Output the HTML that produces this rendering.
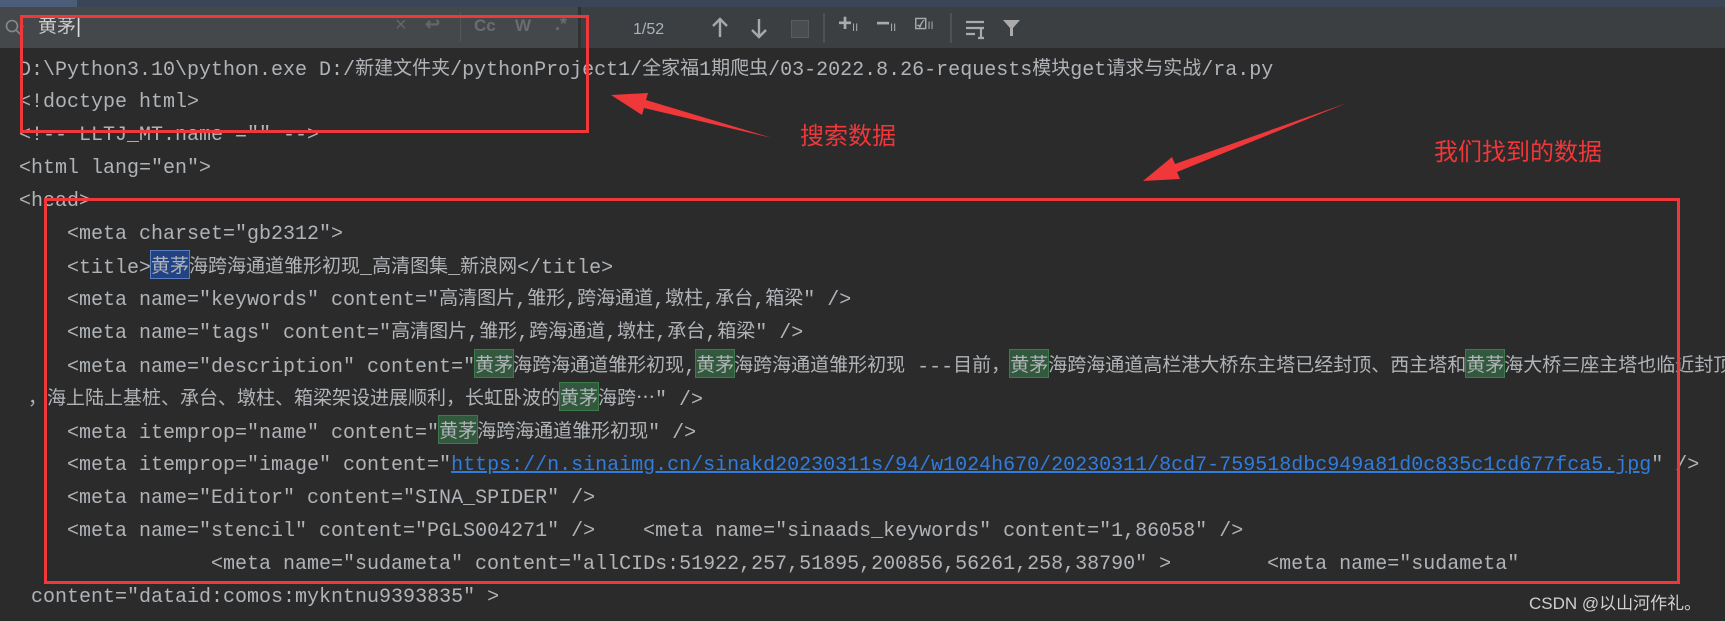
<!DOCTYPE html>
<html><head><meta charset="utf-8"><style>
body{margin:0;width:1725px;height:621px;overflow:hidden;background:#2b2b2b;position:relative;font-family:"Liberation Mono","Noto Sans CJK SC",monospace;font-size:20px;color:#b0b4b8}
.top{position:absolute;left:0;top:0;width:1725px;height:7px;background:#3a4556}
.top i{position:absolute;left:0;top:0;width:77px;height:7px;background:#4b5d78}
.bar{position:absolute;left:0;top:7px;width:1725px;height:41px;background:#3c3f41}
.fld{position:absolute;left:0;top:7px;width:578px;height:41px;background:#45484a;border-right:3px solid #323232}
.l{position:absolute;white-space:pre;height:33px;line-height:33px}
.c{font-family:"Noto Sans CJK SC",sans-serif;font-size:19px;line-height:1;display:inline-block;vertical-align:1px}
.g{background:#32593d;outline:1px solid #3f7a4c;padding:4px 0}
.b{background:#214283;outline:1px solid #5a7ec0;padding:4px 0}
.u{color:#2f7ddf;text-decoration:underline}
.box{position:absolute;border:3px solid #f0373a}
.red{position:absolute;color:#f0373a;font-family:"Noto Sans CJK SC",sans-serif;font-size:24px;white-space:nowrap}
.ic{position:absolute;color:#9a9da0;font-family:"Liberation Sans",sans-serif;font-weight:bold}
</style></head><body>
<div class="top"><i></i></div>
<div class="bar"></div>
<div class="fld"></div>
<svg style="position:absolute;left:4px;top:18px" width="22" height="20"><circle cx="8" cy="8" r="5.5" fill="none" stroke="#888" stroke-width="1.6"/><line x1="12" y1="12" x2="16" y2="16" stroke="#888" stroke-width="1.6"/><path d="M17 8l3 0-1.5 2z" fill="#888"/></svg>
<div class="l" style="left:38px;top:11px;color:#ccc"><span class="c">黄茅</span><span style="color:#ddd;font-family:'Liberation Sans'">|</span></div>
<div class="ic" style="left:395px;top:14px;font-weight:normal;font-size:20px;color:#666">×</div>
<div class="ic" style="left:425px;top:14px;font-size:18px;color:#666">↩</div>
<div style="position:absolute;left:460px;top:12px;width:1px;height:30px;background:#555"></div>
<div class="ic" style="left:474px;top:16px;font-size:17px;color:#6a6d70">Cc</div>
<div class="ic" style="left:515px;top:16px;font-size:17px;color:#6a6d70">W</div>
<div class="ic" style="left:555px;top:14px;font-size:18px;color:#6a6d70">.*</div>
<div class="l" style="left:633px;top:13px;font-family:'Liberation Sans';font-size:16px;color:#a9b2be">1/52</div>
<svg style="position:absolute;left:708px;top:16px" width="120" height="24" fill="none" stroke="#a8a8a8" stroke-width="2.4">
<path d="M12 21V3M5 10L12 3L19 10"/>
<path d="M51 3V21M44 14L51 21L58 14"/>
</svg>
<div style="position:absolute;left:791px;top:20px;width:16px;height:16px;border:1px solid #5a5d60;background:#4a4d50"></div>
<div style="position:absolute;left:823px;top:13px;width:2px;height:30px;background:#4e5254"></div>
<div class="ic" style="left:838px;top:10px;font-size:24px;color:#aaa">+<span style="font-size:11px;font-weight:normal">II</span></div>
<div class="ic" style="left:876px;top:10px;font-size:24px;color:#aaa">−<span style="font-size:11px;font-weight:normal">II</span></div>
<div class="ic" style="left:914px;top:15px;font-size:15px;color:#aaa">☑<span style="font-size:11px;font-weight:normal">II</span></div>
<div style="position:absolute;left:950px;top:13px;width:2px;height:30px;background:#4e5254"></div>
<svg style="position:absolute;left:965px;top:20px" width="22" height="20" stroke="#aaa" stroke-width="2.2"><path d="M1 2H19M1 8H13M1 14H10M16 8V18M13 8H19M13 18H19"/></svg>
<svg style="position:absolute;left:1002px;top:19px" width="20" height="20"><path d="M1 1H18L11 9V17H8V9Z" fill="#aaa"/></svg>

<div class="l" style="left:19px;top:54px">D:\Python3.10\python.exe D:/<span class="c">新建文件夹</span>/pythonProject1/<span class="c">全家福</span>1<span class="c">期爬虫</span>/03-2022.8.26-requests<span class="c">模块</span>get<span class="c">请求与实战</span>/ra.py</div>
<div class="l" style="left:19px;top:86px">&lt;!doctype html&gt;</div>
<div class="l" style="left:19px;top:119px">&lt;!-- LLTJ_MT.name ="" --&gt;</div>
<div class="l" style="left:19px;top:152px">&lt;html lang="en"&gt;</div>
<div class="l" style="left:19px;top:185px">&lt;head&gt;</div>
<div class="l" style="left:67px;top:218px">&lt;meta charset="gb2312"&gt;</div>
<div class="l" style="left:67px;top:251px">&lt;title&gt;<span class="c b">黄茅</span><span class="c">海跨海通道雏形初现</span>_<span class="c">高清图集</span>_<span class="c">新浪网</span>&lt;/title&gt;</div>
<div class="l" style="left:67px;top:284px">&lt;meta name="keywords" content="<span class="c">高清图片</span>,<span class="c">雏形</span>,<span class="c">跨海通道</span>,<span class="c">墩柱</span>,<span class="c">承台</span>,<span class="c">箱梁</span>" /&gt;</div>
<div class="l" style="left:67px;top:317px">&lt;meta name="tags" content="<span class="c">高清图片</span>,<span class="c">雏形</span>,<span class="c">跨海通道</span>,<span class="c">墩柱</span>,<span class="c">承台</span>,<span class="c">箱梁</span>" /&gt;</div>
<div class="l" style="left:67px;top:350px">&lt;meta name="description" content="<span class="c g">黄茅</span><span class="c">海跨海通道雏形初现</span>,<span class="c g">黄茅</span><span class="c">海跨海通道雏形初现</span> ---<span class="c">目前，</span><span class="c g">黄茅</span><span class="c">海跨海通道高栏港大桥东主塔已经封顶、西主塔和</span><span class="c g">黄茅</span><span class="c">海大桥三座主塔也临近封顶</span></div>
<div class="l" style="left:28px;top:383px"><span class="c">，海上陆上基桩、承台、墩柱、箱梁架设进展顺利，长虹卧波的</span><span class="c g">黄茅</span><span class="c">海跨…</span>" /&gt;</div>
<div class="l" style="left:67px;top:416px">&lt;meta itemprop="name" content="<span class="c g">黄茅</span><span class="c">海跨海通道雏形初现</span>" /&gt;</div>
<div class="l" style="left:67px;top:449px">&lt;meta itemprop="image" content="<span class="u">https://n.sinaimg.cn/sinakd20230311s/94/w1024h670/20230311/8cd7-759518dbc949a81d0c835c1cd677fca5.jpg</span>" /&gt;</div>
<div class="l" style="left:67px;top:482px">&lt;meta name="Editor" content="SINA_SPIDER" /&gt;</div>
<div class="l" style="left:67px;top:515px">&lt;meta name="stencil" content="PGLS004271" /&gt;    &lt;meta name="sinaads_keywords" content="1,86058" /&gt;</div>
<div class="l" style="left:211px;top:548px">&lt;meta name="sudameta" content="allCIDs:51922,257,51895,200856,56261,258,38790" &gt;        &lt;meta name="sudameta"</div>
<div class="l" style="left:31px;top:581px">content="dataid:comos:mykntnu9393835" &gt;</div>

<div class="box" style="left:20px;top:15px;width:563px;height:112px"></div>
<div class="box" style="left:44px;top:198px;width:1630px;height:380px"></div>
<svg style="position:absolute;left:0;top:0" width="1725" height="621">
<polygon points="611,95 648,93 646,100 772,138 644,108 642,115" fill="#f0373a"/>
<polygon points="1143,181 1172,157 1175,164 1347,103 1177,172 1180,179" fill="#f0373a"/>
</svg>
<div class="red" style="left:800px;top:116px">搜索数据</div>
<div class="red" style="left:1434px;top:132px">我们找到的数据</div>
<div style="position:absolute;left:1529px;top:589px;color:#d0d0d0;font-family:'Liberation Sans','Noto Sans CJK SC',sans-serif;font-size:17px;white-space:nowrap">CSDN @以山河作礼。</div>
</body></html>
